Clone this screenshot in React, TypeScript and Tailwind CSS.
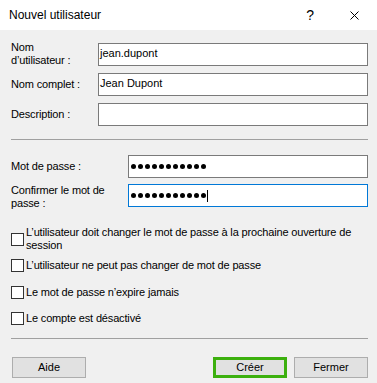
import React from "react";

function Dots({ caret }: { caret?: boolean }) {
  return (
    <div className="flex items-center h-full pl-[2px]">
      <div className="flex gap-[2px]">
        {Array.from({ length: 11 }).map((_, i) => (
          <div key={i} className="w-[5px] h-[5px] rounded-full bg-black" />
        ))}
      </div>
      {caret && <div className="ml-[1px] w-[1px] h-[12px] bg-black" />}
    </div>
  );
}

function TextBox({ value, focused, children }: { value?: string; focused?: boolean; children?: React.ReactNode }) {
  return (
    <div
      className={
        "flex-1 h-[23px] bg-white border " +
        (focused ? "border-[#0078d7]" : "border-[#7a7a7a]")
      }
    >
      {children ?? <div className="pl-[1px] pt-[3px] leading-[13px]">{value}</div>}
    </div>
  );
}

function Check({ children }: { children: React.ReactNode }) {
  return (
    <div className="flex items-center h-[26px] gap-[2px]">
      <div className="w-[13px] h-[13px] shrink-0 bg-white border border-[#333333]" />
      <div className="leading-[13px] tracking-[-0.16px]">{children}</div>
    </div>
  );
}

function Button({ children, primary }: { children: React.ReactNode; primary?: boolean }) {
  return (
    <div
      className={
        "h-[21px] w-[74px] flex items-center justify-center bg-[#e1e1e1] " +
        (primary ? "border-[3px] border-[#3cb00e]" : "border border-[#adadad]")
      }
    >
      {children}
    </div>
  );
}

export default function App() {
  return (
    <div className="w-[377px] h-[383px] bg-[#f0f0f0] text-black text-[11px] font-['Liberation_Sans',Arial,sans-serif] overflow-hidden">
      <div className="h-[30px] bg-white flex items-center">
        <span className="pl-[9px] text-[12px]">Nouvel utilisateur</span>
        <div className="flex-1" />
        <span className="text-[14px] leading-none">?</span>
        <svg className="ml-[36px] mr-[18px]" width="9" height="9" viewBox="0 0 9 9">
          <path d="M0.5 0.5 L8.5 8.5 M8.5 0.5 L0.5 8.5" stroke="#000" strokeWidth="1" fill="none" />
        </svg>
      </div>
      <div className="pl-[11px] pr-[9px] pt-[11px]">
        <div className="flex items-center">
          <div className="w-[87px] leading-[13px] tracking-[-0.16px]">
            Nom
            <br />
            d’utilisateur :
          </div>
          <TextBox value="jean.dupont" />
        </div>
        <div className="flex items-center mt-[6px]">
          <div className="w-[87px] leading-[13px] tracking-[-0.16px]">Nom complet :</div>
          <TextBox value="Jean Dupont" />
        </div>
        <div className="flex items-center mt-[7px]">
          <div className="w-[87px] leading-[13px] tracking-[-0.16px]">Description :</div>
          <TextBox value="" />
        </div>

        <div className="mt-[13px] h-[1px] bg-[#a0a0a0]" />

        <div className="flex items-center mt-[15px]">
          <div className="w-[117px] leading-[13px] tracking-[-0.16px]">Mot de passe :</div>
          <TextBox>
            <Dots />
          </TextBox>
        </div>
        <div className="flex items-start mt-[6px]">
          <div className="w-[117px] leading-[13px] tracking-[-0.16px]">
            Confirmer le mot de
            <br />
            passe :
          </div>
          <TextBox focused>
            <Dots caret />
          </TextBox>
        </div>

        <div className="mt-[16px] flex flex-col gap-[0.5px]">
          <Check>
            L’utilisateur doit changer le mot de passe à la prochaine ouverture de
            <br />
            session
          </Check>
          <Check>L’utilisateur ne peut pas changer de mot de passe</Check>
          <Check>Le mot de passe n’expire jamais</Check>
          <Check>Le compte est désactivé</Check>
        </div>

        <div className="mt-[6.5px] h-[1px] bg-[#a0a0a0]" />

        <div className="mt-[18px] flex items-center">
          <div className="ml-[1px]">
            <Button>Aide</Button>
          </div>
          <div className="flex-1" />
          <Button primary>Créer</Button>
          <div className="ml-[7px]">
            <Button>Fermer</Button>
          </div>
        </div>
      </div>
    </div>
  );
}
